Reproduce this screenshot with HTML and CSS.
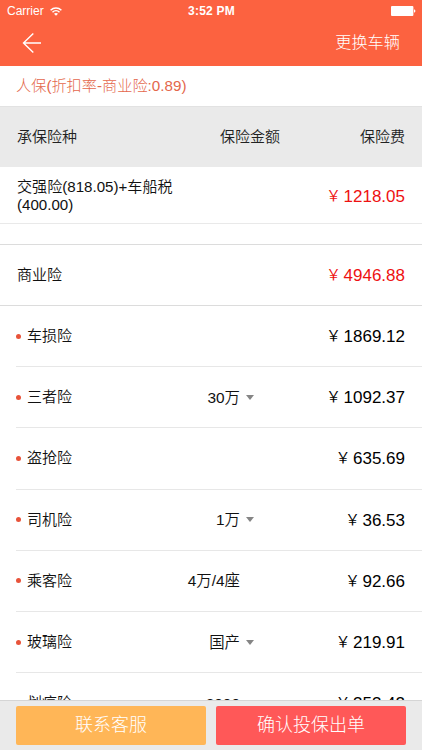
FILE: index.html
```html
<!DOCTYPE html>
<html lang="zh-CN">
<head>
<meta charset="utf-8">
<title>保险报价</title>
<link rel="stylesheet" href="styles.css">
</head>
<body>
<div class="app">
  <header class="header">
    <div class="status">
      <span class="carrier">Carrier <svg class="wifi" viewBox="0 0 12 9" width="12" height="9" fill="none" stroke="#fff" stroke-width="1.5"><path d="M.6 3.3C3.7.3 8.3.3 11.4 3.3M2.5 5.2c2-1.9 5-1.9 7 0"/><path d="M4 6.8c1.2-1 2.8-1 4 0L6 8.8z" fill="#fff" stroke="none"/></svg></span>
      <span class="time">3:52 PM</span>
      <svg class="battery" viewBox="0 0 25 10" width="25" height="10" fill="#fff"><rect width="22.4" height="10" rx="1"/><path d="M23 3.3c1.9.4 1.9 3 0 3.4z"/></svg>
    </div>
    <nav class="nav">
      <svg class="back" viewBox="0 0 20 22" width="20" height="22" fill="none" stroke="#fff" stroke-width="1.4"><path d="M11.3 1.5 1.5 11l9.8 9.6M1.5 11H19"/></svg>
      <span class="change">更换车辆</span>
    </nav>
  </header>
  <div class="company">人保(折扣率-商业险:0.89)</div>
  <div class="row head"><span class="name">承保险种</span><span class="amount">保险金额</span><span class="fee">保险费</span></div>
  <div class="row compulsory"><span class="name">交强险(818.05)+车船税<br>(400.00)</span><span class="fee price red"><i>￥</i>1218.05</span></div>
  <div class="gap"></div>
  <div class="row total"><span class="name">商业险</span><span class="fee price red"><i>￥</i>4946.88</span></div>
  <main class="list">
    <div class="row item"><span class="name dot">车损险</span><span class="amount"></span><span class="fee price"><i>￥</i>1869.12</span></div>
    <div class="row item"><span class="name dot">三者险</span><span class="amount select">30万</span><span class="fee price"><i>￥</i>1092.37</span></div>
    <div class="row item"><span class="name dot">盗抢险</span><span class="amount"></span><span class="fee price"><i>￥</i>635.69</span></div>
    <div class="row item"><span class="name dot">司机险</span><span class="amount select">1万</span><span class="fee price"><i>￥</i>36.53</span></div>
    <div class="row item"><span class="name dot">乘客险</span><span class="amount">4万/4座</span><span class="fee price"><i>￥</i>92.66</span></div>
    <div class="row item"><span class="name dot">玻璃险</span><span class="amount select">国产</span><span class="fee price"><i>￥</i>219.91</span></div>
    <div class="row item"><span class="name dot">划痕险</span><span class="amount">2000</span><span class="fee price"><i>￥</i>353.42</span></div>
  </main>
  <footer class="footer">
    <button class="btn contact">联系客服</button>
    <button class="btn confirm">确认投保出单</button>
  </footer>
</div>
</body>
</html>
```
FILE: styles.css
```css
* { box-sizing: border-box; }
body {
  margin: 0;
  background: #fff;
  color: #111;
  font: 350 15px/18px "Liberation Sans", "Noto Sans CJK SC", sans-serif;
}
.app { display: flex; flex-direction: column; height: 750px; overflow: hidden; }
.header { flex: none; height: 65.5px; background: #fc6240; color: #fff; }
.status {
  display: grid;
  grid-template-columns: 1fr auto 1fr;
  align-items: center;
  height: 22px;
  padding: 0 6px 0 7px;
  font-size: 12px;
}
.carrier { display: flex; align-items: center; gap: 6px; }
.time { font-weight: 700; font-size: 12px; letter-spacing: .2px; }
.battery { justify-self: end; }
.nav { display: flex; align-items: center; justify-content: space-between; height: 42px; padding: 0 22px; }
.change { font-size: 16.2px; font-weight: 300; line-height: 20px; padding-bottom: 2px; }
.company { flex: none; height: 40px; padding: 11.4px 16px 0; color: #e4674c; font-size: 15.2px; font-weight: 300; }
.row {
  flex: none;
  display: grid;
  grid-template-columns: 180px 44px 1fr;
  align-items: center;
  padding-right: 17px;
}
.name { grid-column: 1; white-space: nowrap; }
.amount { grid-column: 2; justify-self: end; white-space: nowrap; }
.fee { grid-column: 3; justify-self: end; }
.head { height: 61.5px; padding-left: 17px; background: #eaeaea; border-top: 1px solid #e2e2e2; color: #222; }
.head .amount { margin-right: -39px; }
.compulsory { height: 57px; padding: 2px 17px 0; border-bottom: 1px solid #e9e9e9; }
.compulsory .name { font-size: 15.1px; }
.gap { flex: none; height: 21px; border-bottom: 1px solid #dcdcdc; }
.total { height: 61px; padding-left: 17px; border-bottom: 1px solid #dcdcdc; }
.price { padding-top: 2px; font-size: 17px; line-height: 20px; color: #000; white-space: nowrap; }
.price i { margin-right: 2.5px; font-size: 15px; line-height: 1; font-style: normal; vertical-align: 1px; }
.price.red { color: #ee1111; }
.list { flex: 1; min-height: 0; overflow: hidden; }
.item { height: 61.2px; margin-left: 16px; border-bottom: 1px solid #e7e7e7; }
.item .amount { font-size: 15.4px; padding-top: 1px; }
.dot { display: flex; align-items: center; gap: 6px; }
.dot::before { content: ""; width: 5px; height: 5px; border-radius: 50%; background: #e8533a; }
.select { position: relative; }
.select::after {
  content: "";
  position: absolute;
  left: calc(100% + 6px);
  top: 7px;
  border: solid transparent;
  border-width: 5px 4.5px 0;
  border-top-color: #858585;
}
.footer {
  flex: none;
  display: flex;
  gap: 10px;
  height: 50.5px;
  padding: 5px 16px 5.5px;
  background: #eaeaea;
  border-top: 1px solid #d5d5d5;
}
.btn {
  flex: 1;
  padding: 0;
  border: 0;
  border-radius: 2px;
  color: #fff;
  font: 300 18px/24px "Liberation Sans", "Noto Sans CJK SC", sans-serif;
}
.contact { background: #ffb657; }
.confirm { background: #ff5858; }
```
